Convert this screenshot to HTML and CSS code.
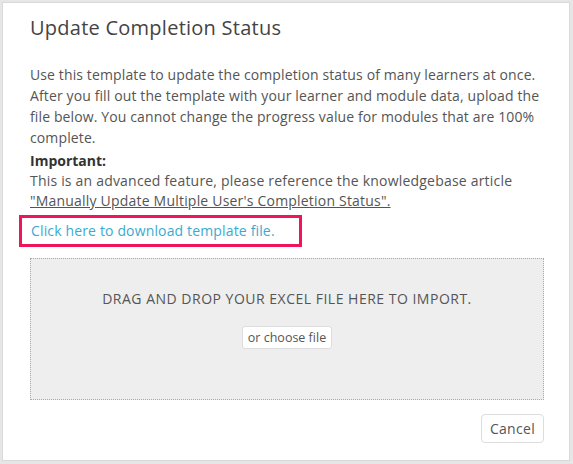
FILE: index.html
```html
<!DOCTYPE html>
<html lang="en">
<head>
  <meta charset="UTF-8">
  <title>Update Completion Status</title>
  <link rel="stylesheet" href="styles.css">
</head>
<body>
  <div class="modal">
    <h2 class="modal-title">Update Completion Status</h2>
    <p class="intro">Use this template to update the completion status of many learners at once.<br>
      After you fill out the template with your learner and module data, upload the<br>
      file below. You cannot change the progress value for modules that are 100%<br>
      complete.</p>
    <p class="important"><strong>Important:</strong><br>
      This is an advanced feature, please reference the knowledgebase article
      <a href="#" class="kb-link">"Manually Update Multiple User's Completion Status".</a></p>
    <div class="download-box">
      <a href="#" class="download-link">Click here to download template file.</a>
    </div>
    <div class="dropzone">
      <p class="drop-text">DRAG AND DROP YOUR EXCEL FILE HERE TO IMPORT.</p>
      <button class="choose-btn">or choose file</button>
    </div>
    <div class="footer">
      <button class="cancel-btn">Cancel</button>
    </div>
  </div>
</body>
</html>
```

FILE: styles.css
```css
html, body {
  height: 100%;
}
body {
  margin: 0;
  padding: 2px 3px 3px 2px;
  box-sizing: border-box;
  background-color: #e6e6e6;
  font-family: "Open Sans", sans-serif;
  color: #555;
}
.modal {
  height: 100%;
  box-sizing: border-box;
  background: #fff;
  border: 1px solid #d9d9d9;
  padding: 11px 25px 0 27px;
}
.modal-title {
  margin: 0;
  font-size: 20px;
  font-weight: 400;
  letter-spacing: 0.25px;
  color: #444;
  line-height: 28px;
}
.intro {
  margin: 22px 0 0;
  font-size: 14px;
  line-height: 21px;
  letter-spacing: 0.12px;
  white-space: nowrap;
}
.important {
  margin: 3px 0 0;
  font-size: 14px;
  line-height: 20px;
  letter-spacing: 0.2px;
}
.important strong {
  color: #333;
  font-weight: 700;
  letter-spacing: 0;
}
.kb-link {
  color: #555;
  text-decoration: underline;
}
.download-box {
  width: fit-content;
  margin: 4px 0 0 -11px;
  padding: 3px 24px 3px 9px;
  border: 3px solid #f0145a;
}
.download-link {
  display: block;
  color: #3aaad2;
  text-decoration: none;
  font-size: 14px;
  line-height: 20px;
  letter-spacing: 0.15px;
}
.dropzone {
  margin-top: 11px;
  height: 140px;
  border: 1px dotted #aaa;
  background: #eee;
  display: flex;
  flex-direction: column;
  align-items: center;
}
.drop-text {
  margin: 30px 0 0;
  font-size: 14px;
  letter-spacing: 0.5px;
  color: #555;
}
.choose-btn {
  margin-top: 18px;
  font-family: "Open Sans", sans-serif;
  font-size: 12.5px;
  color: #555;
  background: #fff;
  border: 1px solid #ddd;
  border-radius: 3px;
  padding: 2px 5px;
}
.footer {
  display: flex;
  justify-content: flex-end;
  margin-top: 14px;
}
.cancel-btn {
  font-family: "Open Sans", sans-serif;
  font-size: 14px;
  letter-spacing: 0.3px;
  color: #555;
  background: #fff;
  border: 1px solid #ddd;
  border-radius: 4px;
  padding: 4px 8px;
}
```
